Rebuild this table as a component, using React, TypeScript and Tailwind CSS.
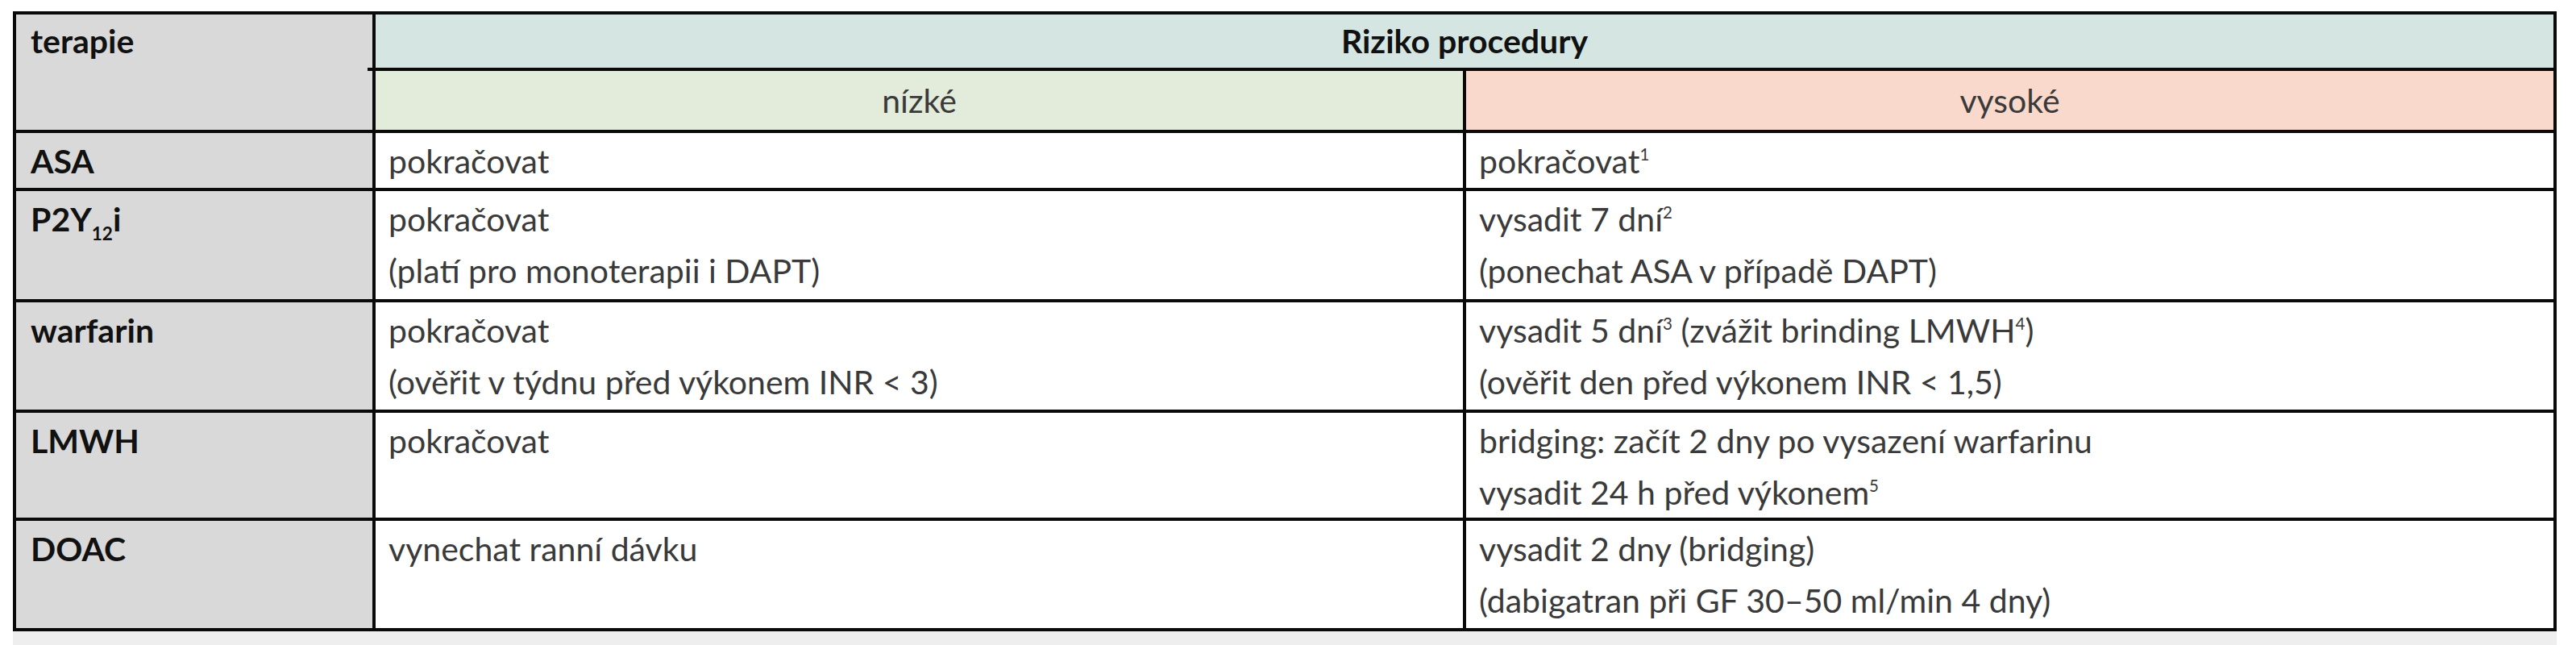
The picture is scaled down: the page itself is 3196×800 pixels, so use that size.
import React from "react";

const font = { fontFamily: '"Lato", "Noto Sans", "DejaVu Sans", sans-serif' };

function Sup({ children }: { children: React.ReactNode }) {
  return <sup className="text-[0.5em] top-[-0.8em]">{children}</sup>;
}

const label = "bg-[#d9d9d9] px-[18px] pt-[3px] font-bold text-[#111111] leading-[64px]";
const body = "bg-white px-[16px] pt-[3px] text-[#3a3a3a] leading-[64px]";

export default function App() {
  return (
    <div className="w-[3196px] h-[800px] bg-white" style={font}>
      <div className="pt-[14px] pl-[16px]">
        <div className="grid w-[3156px] grid-cols-[442px_1349px_1349px] grid-rows-[66px_73px_68px_134px_133px_130px_133px] gap-[4px] bg-[#0a0a0a] p-[4px] text-[41px]">
          <div className="relative row-span-2 bg-[#d9d9d9] px-[18px] pt-[1px] font-bold text-[#111111] leading-[64px]">
            terapie
            <div className="absolute right-0 top-[66px] h-[4px] w-[6px] bg-[#0a0a0a]" />
          </div>
          <div className="col-span-2 bg-[#d5e6e2] text-center font-bold text-[#111111] leading-[64px] pt-[1px]">Riziko procedury</div>
          <div className="bg-[#e3ebdb] text-center text-[#3a3a3a] leading-[64px] pt-[5px]">nízké</div>
          <div className="bg-[#f9d9cb] text-center text-[#3a3a3a] leading-[64px] pt-[5px]">vysoké</div>

          <div className={label}>ASA</div>
          <div className={body}>pokračovat</div>
          <div className={body}>
            pokračovat<Sup>1</Sup>
          </div>

          <div className={label}>
            P2Y<sub className="text-[0.55em] bottom-[-0.5em]">12</sub>i
          </div>
          <div className={body}>
            <div>pokračovat</div>
            <div>(platí pro monoterapii i DAPT)</div>
          </div>
          <div className={body}>
            <div>
              vysadit 7 dní<Sup>2</Sup>
            </div>
            <div>(ponechat ASA v případě DAPT)</div>
          </div>

          <div className={label}>warfarin</div>
          <div className={body}>
            <div>pokračovat</div>
            <div>(ověřit v týdnu před výkonem INR &lt; 3)</div>
          </div>
          <div className={body}>
            <div>
              vysadit 5 dní<Sup>3</Sup> (zvážit brinding LMWH<Sup>4</Sup>)
            </div>
            <div>(ověřit den před výkonem INR &lt; 1,5)</div>
          </div>

          <div className={label}>LMWH</div>
          <div className={body}>pokračovat</div>
          <div className={body}>
            <div>bridging: začít 2 dny po vysazení warfarinu</div>
            <div>
              vysadit 24 h před výkonem<Sup>5</Sup>
            </div>
          </div>

          <div className={label}>DOAC</div>
          <div className={body}>vynechat ranní dávku</div>
          <div className={body}>
            <div>vysadit 2 dny (bridging)</div>
            <div>(dabigatran při GF 30–50 ml/min 4 dny)</div>
          </div>
        </div>
        <div className="h-[17px] w-[3156px] bg-[#eeeeee]" />
      </div>
    </div>
  );
}
